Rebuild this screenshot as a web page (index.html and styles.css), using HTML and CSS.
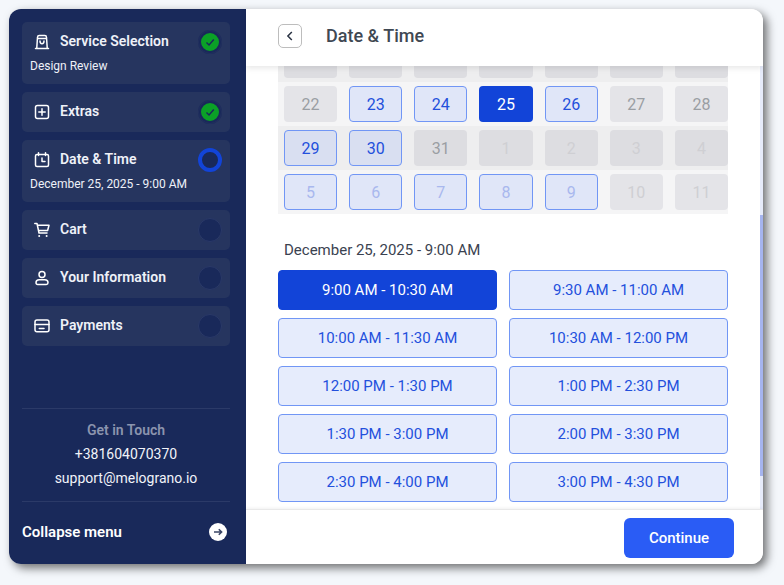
FILE: index.html

```html
<!DOCTYPE html>
<html lang="en">
<head>
  <meta charset="UTF-8">
  <title>Booking - Date &amp; Time</title>
  <meta name="viewport" content="width=device-width, initial-scale=1.0">
  <link rel="stylesheet" href="styles.css">
</head>
<body>
  <div class="booking">
    <aside class="sidebar">
      <nav class="steps">
        <div class="step">
          <div class="step-row">
            <svg class="step-icon" viewBox="0 0 16 16"><path d="M3.5 3.2 Q3.6 1.5 5.2 1.5 H10.8 Q12.4 1.5 12.5 3.2 L13.2 13.5 Q13.2 14.5 12.2 14.5 H3.8 Q2.8 14.5 2.8 13.5 Z M1.5 14.5 H14.5 M3.4 4.5 H12.6 M6 7 Q6 9.7 8 9.7 Q10 9.7 10 7"/></svg>
            <span class="step-name">Service Selection</span>
            <span class="status done"><svg viewBox="0 0 12 12"><path d="M2.5 6.5 L5 9 L9.8 3.5"/></svg></span>
          </div>
          <div class="step-note">Design Review</div>
        </div>
        <div class="step">
          <div class="step-row">
            <svg class="step-icon" viewBox="0 0 16 16"><rect x="1.5" y="1.5" width="13" height="13" rx="2"/><path d="M8 4.8 V11.2 M4.8 8 H11.2"/></svg>
            <span class="step-name">Extras</span>
            <span class="status done"><svg viewBox="0 0 12 12"><path d="M2.5 6.5 L5 9 L9.8 3.5"/></svg></span>
          </div>
        </div>
        <div class="step">
          <div class="step-row">
            <svg class="step-icon" viewBox="0 0 16 16"><path d="M4.5 .8 V3.5 M11.5 .8 V3.5 M3 2.5 H13 Q14.5 2.5 14.5 4 V13 Q14.5 14.5 13 14.5 H3 Q1.5 14.5 1.5 13 V4 Q1.5 2.5 3 2.5 Z M8 6 V9.5 H11"/></svg>
            <span class="step-name">Date &amp; Time</span>
            <span class="status current"></span>
          </div>
          <div class="step-note">December 25, 2025 - 9:00 AM</div>
        </div>
        <div class="step">
          <div class="step-row">
            <svg class="step-icon" viewBox="0 0 16 16"><path d="M.8 1.5 H3 L5 11 H13 M3.4 3.3 H15 L13.6 8.5 H4.5"/><circle class="dot" cx="5.2" cy="14" r="1"/><circle class="dot" cx="12.6" cy="14" r="1"/></svg>
            <span class="step-name">Cart</span>
            <span class="status"></span>
          </div>
        </div>
        <div class="step">
          <div class="step-row">
            <svg class="step-icon" viewBox="0 0 16 16"><circle cx="8" cy="4.5" r="3"/><path d="M5.2 9.8 H10.8 Q14 9.8 14 12.8 Q14 14.5 12.3 14.5 H3.7 Q2 14.5 2 12.8 Q2 9.8 5.2 9.8 Z"/></svg>
            <span class="step-name">Your Information</span>
            <span class="status"></span>
          </div>
        </div>
        <div class="step">
          <div class="step-row">
            <svg class="step-icon" viewBox="0 0 16 16"><rect x="1" y="2" width="14" height="11.7" rx="2"/><path d="M1 6.5 H15 M5.3 10.5 H10"/></svg>
            <span class="step-name">Payments</span>
            <span class="status"></span>
          </div>
        </div>
      </nav>

      <div class="contact">
        <div class="contact-title">Get in Touch</div>
        <div>+381604070370</div>
        <div>support@melograno.io</div>
      </div>

      <div class="collapse">
        <span>Collapse menu</span>
        <svg class="collapse-icon" viewBox="0 0 18 18"><circle cx="9" cy="9" r="9"/><path d="M5 9 H12.5 M9.8 6.2 L12.6 9 L9.8 11.8"/></svg>
      </div>
    </aside>

    <main class="panel">
      <header class="panel-head">
        <button class="back"><svg viewBox="0 0 10 10"><path d="M6.3 2.2 L3.5 5 L6.3 7.8"/></svg></button>
        <h1>Date &amp; Time</h1>
      </header>

      <div class="panel-body">
        <div class="calendar">
          <div class="week alt">
            <div class="day"></div><div class="day"></div><div class="day"></div><div class="day"></div><div class="day"></div><div class="day"></div><div class="day"></div>
          </div>
          <div class="week">
            <div class="day">22</div><div class="day open">23</div><div class="day open">24</div><div class="day picked">25</div><div class="day open">26</div><div class="day">27</div><div class="day">28</div>
          </div>
          <div class="week alt">
            <div class="day open">29</div><div class="day open">30</div><div class="day">31</div><div class="day next">1</div><div class="day next">2</div><div class="day next">3</div><div class="day next">4</div>
          </div>
          <div class="week">
            <div class="day open next">5</div><div class="day open next">6</div><div class="day open next">7</div><div class="day open next">8</div><div class="day open next">9</div><div class="day next">10</div><div class="day next">11</div>
          </div>
        </div>

        <div class="picked-label">December 25, 2025 - 9:00 AM</div>

        <div class="slots">
          <button class="slot active">9:00 AM - 10:30 AM</button>
          <button class="slot">9:30 AM - 11:00 AM</button>
          <button class="slot">10:00 AM - 11:30 AM</button>
          <button class="slot">10:30 AM - 12:00 PM</button>
          <button class="slot">12:00 PM - 1:30 PM</button>
          <button class="slot">1:00 PM - 2:30 PM</button>
          <button class="slot">1:30 PM - 3:00 PM</button>
          <button class="slot">2:00 PM - 3:30 PM</button>
          <button class="slot">2:30 PM - 4:00 PM</button>
          <button class="slot">3:00 PM - 4:30 PM</button>
        </div>

        <div class="scrollbar"><div class="scrollbar-thumb"></div></div>
      </div>

      <footer class="panel-foot">
        <button class="continue">Continue</button>
      </footer>
    </main>
  </div>
</body>
</html>
```

FILE: styles.css

```css
* {
  box-sizing: border-box;
}

html, body {
  height: 100%;
}

body {
  margin: 0;
  padding: 9px 21px 21px 9px;
  overflow: hidden;
  font-family: Roboto, sans-serif;
  background: #f4f7fb;
}

button {
  font-family: inherit;
  cursor: pointer;
}

.booking {
  display: flex;
  height: 100%;
  border-radius: 12px;
  overflow: hidden;
  background: #fff;
  box-shadow: 4px 4px 10px rgba(0, 0, 0, 0.55);
}

/* sidebar */

.sidebar {
  flex: 0 0 237px;
  display: flex;
  flex-direction: column;
  padding: 13px 16px 0 13px;
  background: #19295a;
  color: #fff;
}

.steps {
  flex: 1;
  display: flex;
  flex-direction: column;
  gap: 8px;
}

.step {
  background: #26355f;
  border-radius: 5px;
}

.step-row {
  display: flex;
  align-items: center;
  height: 40px;
  padding: 0 8px 0 12px;
}

.step-icon {
  flex: none;
  width: 16px;
  height: 16px;
  margin-right: 10px;
  fill: none;
  stroke: #fff;
  stroke-width: 1.5;
  stroke-linejoin: round;
  stroke-linecap: round;
}

.step-icon .dot {
  fill: #fff;
  stroke: none;
}

.step-name {
  flex: 1;
  padding-bottom: 2px;
  font-size: 14px;
  font-weight: 600;
  color: #eef1f8;
}

.step-note {
  padding: 0 8px 10px;
  margin-top: -3px;
  height: 25px;
  font-size: 12px;
  line-height: 15px;
  color: #eef1f8;
}

.status {
  flex: none;
  width: 24px;
  height: 24px;
  border-radius: 50%;
  background: #19295a;
  border: 1px solid #2a3968;
}

.status.done {
  display: flex;
  align-items: center;
  justify-content: center;
  background: #0ba127;
  border: 3px solid #19295a;
  outline: 1px solid #22305f;
  outline-offset: -1px;
}

.status.done svg {
  width: 12px;
  height: 12px;
  fill: none;
  stroke: #19295a;
  stroke-width: 1.4;
}

.status.current {
  background: #19295a;
  border: 4px solid #1244d8;
}

.contact {
  display: flex;
  flex-direction: column;
  gap: 8px;
  padding: 13px 0 15px;
  border-top: 1px solid #2b3a68;
  border-bottom: 1px solid #2b3a68;
  font-size: 14px;
  line-height: 16px;
  text-align: center;
  color: #f1f3f9;
}

.contact-title {
  font-weight: 600;
  color: #8b94ae;
}

.collapse {
  display: flex;
  align-items: center;
  justify-content: space-between;
  height: 62px;
  padding: 0 3px 2px 0;
  font-size: 15px;
  font-weight: 600;
}

.collapse-icon {
  width: 18px;
  height: 18px;
}

.collapse-icon circle {
  fill: #fff;
}

.collapse-icon path {
  fill: none;
  stroke: #3a4566;
  stroke-width: 1.6;
}

/* main panel */

.panel {
  flex: 1;
  min-width: 0;
  display: flex;
  flex-direction: column;
}

.panel-head {
  position: relative;
  z-index: 2;
  flex: none;
  display: flex;
  align-items: center;
  height: 57px;
  padding: 0 32px 3px;
  background: #fff;
  box-shadow: 0 2px 6px rgba(0, 0, 0, 0.1);
}

.back {
  display: flex;
  align-items: center;
  justify-content: center;
  width: 24px;
  height: 24px;
  padding: 0;
  margin-right: 24px;
  background: #fff;
  border: 1px solid #bdbdbd;
  border-radius: 5px;
}

.back svg {
  width: 14px;
  height: 14px;
  fill: none;
  stroke: #2b3444;
  stroke-width: 1.1;
}

.panel-head h1 {
  margin: 0 0 2px;
  font-size: 18px;
  font-weight: 500;
  color: #3f4853;
}

.panel-body {
  position: relative;
  flex: 1;
  min-height: 0;
  padding: 0 35px 0 32px;
  overflow: hidden;
}

.scrollbar {
  position: absolute;
  top: 0;
  right: 0;
  bottom: 0;
  width: 3px;
  background: #e6ebfa;
}

.scrollbar-thumb {
  height: 261px;
  margin-top: 149px;
  background: #a5b4ef;
}

.calendar {
  margin-top: -28px;
}

.week {
  display: grid;
  grid-template-columns: repeat(7, 1fr);
  gap: 12px;
  padding: 4px 0 4px 6px;
  background: #f5f5f6;
}

.week.alt {
  background: #eeeeef;
}

.day {
  display: flex;
  align-items: center;
  justify-content: center;
  height: 36px;
  border-radius: 4px;
  font-size: 16px;
  color: #9a9ea3;
  background: #e4e4e8;
}

.week.alt .day {
  background: #ddddE1;
}

.day.open {
  color: #2350dc;
  background: #e0e6f8;
  border: 1px solid #7196f5;
}

.week.alt .day.open {
  background: #d9dff1;
}

.day.picked {
  color: #fff;
  background: #1244d8;
}

.day.next {
  color: #cfcfd3;
}

.day.open.next {
  color: #a9b8ee;
}

.picked-label {
  height: 56px;
  padding: 27px 0 0 6px;
  font-size: 15px;
  line-height: 18px;
  color: #3a4250;
}

.slots {
  display: grid;
  grid-template-columns: 1fr 1fr;
  gap: 8px 12px;
  width: 450px;
}

.slot {
  height: 40px;
  padding: 0;
  font-size: 15px;
  color: #2350dc;
  background: #e6ecfc;
  border: 1px solid #7196f5;
  border-radius: 4px;
}

.slot.active {
  color: #fff;
  background: #1244d8;
  border-color: #1244d8;
}

.panel-foot {
  position: relative;
  flex: none;
  display: flex;
  justify-content: flex-end;
  height: 55px;
  padding: 8px 29px 0 0;
  border-top: 1px solid #e9e9e9;
  background: #fff;
  box-shadow: 0 -1px 3px rgba(0, 0, 0, 0.06);
}

.continue {
  width: 110px;
  height: 40px;
  font-size: 15px;
  font-weight: 500;
  color: #fff;
  background: #2a5cf5;
  border: none;
  border-radius: 6px;
}
```
